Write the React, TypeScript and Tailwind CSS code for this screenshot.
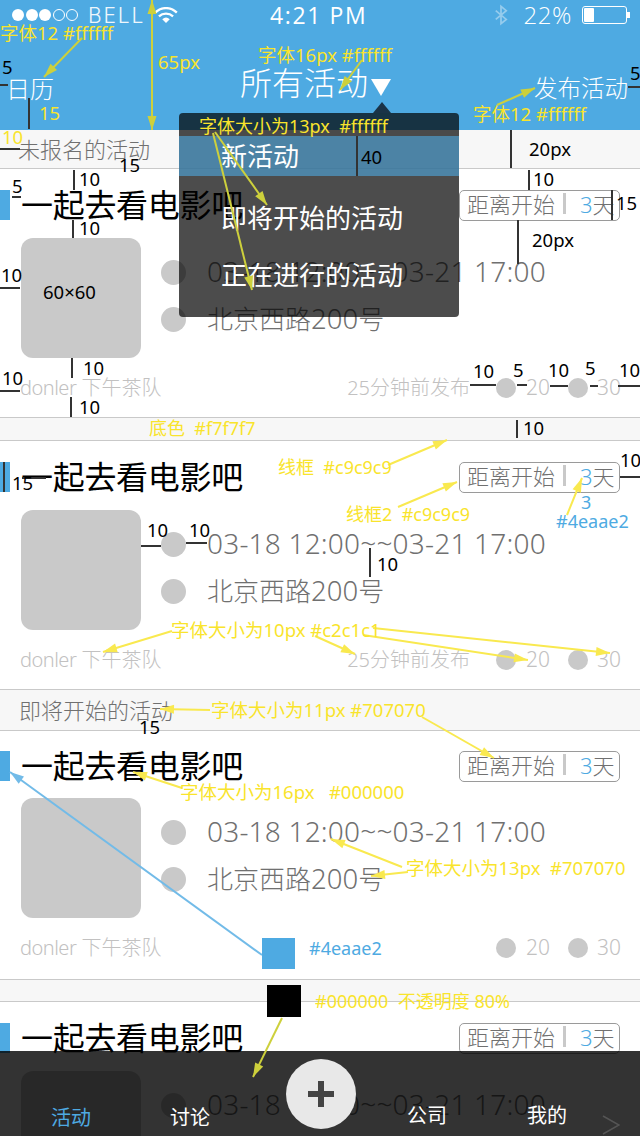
import React from "react";

const Dot = () => <span className="w-[25px] h-[25px] rounded-full bg-[#c9c9c9] shrink-0" />;
const SmallDot = ({ c }: { c: string }) => <span className={`${c} w-[20px] h-[20px] rounded-full bg-[#c9c9c9] shrink-0`} />;

function Section({ text, h }: { text: string; h: string }) {
  return (
    <div className={`${h} flex items-center bg-[#f7f7f7] text-[22px] text-[#707070]`}>{text}</div>
  );
}

function Card({ time = true, compact = false }: { time?: boolean; compact?: boolean }) {
  return (
    <div className={`h-[250px] shrink-0 bg-white border-y border-[#c9c9c9] overflow-hidden ${compact ? "pt-[20px]" : "pt-[21px]"}`}>
      <div className="h-[30px] flex items-center">
        <span className="w-[10px] h-[30px] bg-[#4eaae2]" />
        <span className="ml-[11px] text-[32px] leading-[30px] text-black font-normal tracking-[-0.3px]">一起去看电影吧</span>
        <div className="ml-auto mr-5 w-[161px] h-[31px] flex items-center border border-[#9a9a9a] rounded-[5px] pl-[7px] pb-[3px] text-[22px] leading-[26px] text-[#707070]">
          <span>距离开始</span>
          <span className="ml-[8px] w-[3px] h-[21px] bg-[#c9c9c9]" />
          <span className="ml-[14px] text-[#4eaae2]">3</span>
          <span>天</span>
        </div>
      </div>
      <div className={`${compact ? "mt-[17px]" : "mt-[18px]"} ml-[21px] flex h-[120px]`}>
        <div className="w-[120px] h-[120px] rounded-[12px] bg-[#c9c9c9]" />
        <div className="ml-5 pt-[22px] flex flex-col gap-[21px] text-[26px] leading-[25px] text-[#707070]">
          <div className="flex items-center gap-[21px]"><Dot /><span className="text-[28px] tracking-[0.2px] -translate-y-px">03-18 12:00~~03-21 17:00</span></div>
          <div className="flex items-center gap-[21px]"><Dot /><span className="text-[26px]">北京西路<span className="text-[27.5px]">200</span>号</span></div>
        </div>
      </div>
      <div className="mt-5 h-[20px] pl-5 pr-5 flex items-center text-[20px] text-[#c2c1c1]">
        <span className="flex-1 whitespace-pre"><span className="tracking-[-0.5px]">donler</span> 下午茶队</span>
        {time && <span>25分钟前发布</span>}
        <SmallDot c="ml-[26px]" />
        <span className="ml-[10px] text-[21px] w-[23px]">20</span>
        <SmallDot c="ml-[19px]" />
        <span className="ml-[9px] text-[21px] w-[23px]">30</span>
      </div>
    </div>
  );
}

const yellowLabels = [
  { c: "left-0 top-[23px] text-[18.5px]", t: "字体12 #ffffff" },
  { c: "left-[158px] top-[52px] text-[18.5px]", t: "65px" },
  { c: "left-[39px] top-[103px] text-[18.5px]", t: "15" },
  { c: "left-[2px] top-[127px] text-[18.5px]", t: "10" },
  { c: "left-[258px] top-[45px] text-[18.5px]", t: "字体16px #ffffff" },
  { c: "left-[473px] top-[104px] text-[18.5px]", t: "字体12 #ffffff" },
  { c: "left-[199px] top-[116px] text-[18px]", t: "字体大小为13px  #ffffff" },
  { c: "left-[149px] top-[418px] text-[18px]", t: "底色  #f7f7f7" },
  { c: "left-[278px] top-[457px] text-[18px]", t: "线框  #c9c9c9" },
  { c: "left-[346px] top-[504px] text-[18px]", t: "线框2  #c9c9c9" },
  { c: "left-[171px] top-[620px] text-[18.5px]", t: "字体大小为10px #c2c1c1" },
  { c: "left-[211px] top-[700px] text-[18.5px]", t: "字体大小为11px #707070" },
  { c: "left-[180px] top-[782px] text-[18.5px]", t: "字体大小为16px   #000000" },
  { c: "left-[406px] top-[858px] text-[18.5px]", t: "字体大小为13px  #707070" },
  { c: "left-[315px] top-[991px] text-[18px]", t: "#000000  不透明度 80%" },
];
const blueLabels = [
  { c: "left-[581px] top-[492px]", t: "3" },
  { c: "left-[556px] top-[511px]", t: "#4eaae2" },
  { c: "left-[309px] top-[938px]", t: "#4eaae2" },
];
const blackLabels = [
  { c: "left-[2px] top-[57px]", t: "5" },
  { c: "left-[630px] top-[63px]", t: "5" },
  { c: "left-[529px] top-[139px]", t: "20px" },
  { c: "left-[119px] top-[155px]", t: "15" },
  { c: "left-[79px] top-[169px]", t: "10" },
  { c: "left-[533px] top-[169px]", t: "10" },
  { c: "left-[12px] top-[176px]", t: "5" },
  { c: "left-[79px] top-[218px]", t: "10" },
  { c: "left-[616px] top-[193px]", t: "15" },
  { c: "left-[532px] top-[230px]", t: "20px" },
  { c: "left-[361px] top-[147px]", t: "40" },
  { c: "left-[43px] top-[282px]", t: "60×60" },
  { c: "left-[1px] top-[265px]", t: "10" },
  { c: "left-[83px] top-[358px]", t: "10" },
  { c: "left-[2px] top-[368px]", t: "10" },
  { c: "left-[79px] top-[397px]", t: "10" },
  { c: "left-[473px] top-[361px]", t: "10" },
  { c: "left-[513px] top-[360px]", t: "5" },
  { c: "left-[548px] top-[360px]", t: "10" },
  { c: "left-[585px] top-[358px]", t: "5" },
  { c: "left-[619px] top-[360px]", t: "10" },
  { c: "left-[523px] top-[418px]", t: "10" },
  { c: "left-[12px] top-[473px]", t: "15" },
  { c: "left-[620px] top-[450px]", t: "10" },
  { c: "left-[147px] top-[520px]", t: "10" },
  { c: "left-[189px] top-[520px]", t: "10" },
  { c: "left-[377px] top-[554px]", t: "10" },
  { c: "left-[139px] top-[717px]", t: "15" },
];

const blackLines: [number, number, number, number][] = [
  [29, 98, 29, 129], [0, 85, 8, 85], [628, 87, 640, 87], [0, 149, 20, 149], [511, 130, 511, 168],
  [357, 136, 357, 176], [74, 170, 74, 190], [73, 220, 73, 238], [529, 170, 529, 190], [518, 220, 518, 264],
  [612, 190, 612, 220], [12, 197, 21, 197], [0, 288, 20, 288], [72, 358, 72, 378], [71, 397, 71, 417], [0, 391, 20, 391],
  [470, 385, 496, 385], [517, 385, 527, 385], [550, 386, 568, 386], [590, 386, 598, 386], [618, 386, 640, 386],
  [517, 420, 517, 438], [4, 462, 4, 492], [22, 478, 46, 478], [141, 546, 161, 546], [186, 543, 207, 543],
  [370, 548, 370, 577], [620, 477, 640, 477],
];

const Arrow = ({ d, color }: { d: [number, number, number, number]; color: string }) => {
  const [x1, y1, x2, y2] = d;
  const a = Math.atan2(y2 - y1, x2 - x1);
  const l = 14;
  const s = 4.5;
  const bx = x2 - l * Math.cos(a);
  const by = y2 - l * Math.sin(a);
  const p = `${x2},${y2} ${bx - s * Math.sin(a)},${by + s * Math.cos(a)} ${bx + s * Math.sin(a)},${by - s * Math.cos(a)}`;
  return (
    <g>
      <line x1={x1} y1={y1} x2={x2} y2={y2} stroke={color} strokeWidth={2} />
      <polygon points={p} fill={color} />
    </g>
  );
};

const yellowArrows: [number, number, number, number][] = [
  [388, 465, 447, 440], [398, 507, 457, 482], [567, 515, 582, 478], [172, 631, 103, 652], [315, 636, 355, 654],
  [363, 635, 528, 660], [373, 628, 610, 653], [210, 710, 160, 709], [422, 717, 494, 758], [182, 788, 133, 772],
  [402, 867, 331, 839], [408, 872, 371, 876],
];
const oliveArrows: [number, number, number, number][] = [
  [82, 38, 44, 77], [152, 20, 152, 130], [152, 50, 152, 0], [362, 60, 340, 90], [497, 105, 535, 88],
  [215, 132, 267, 205], [213, 133, 252, 290], [282, 1018, 253, 1077],
];

export default function App() {
  return (
    <div className="relative w-[640px] h-[1136px] overflow-hidden bg-[#f7f7f7] font-['Noto_Sans','Noto_Sans_CJK_SC',sans-serif] font-light">
      {/* Header */}
      <header className="h-[130px] bg-[#4eaae2] text-white">
        <div className="h-[30px] flex items-center pl-3 pr-[10px] relative">
          <div className="flex gap-[1.5px]">
            <span className="w-3 h-3 rounded-full bg-white" />
            <span className="w-3 h-3 rounded-full bg-white" />
            <span className="w-3 h-3 rounded-full bg-white" />
            <span className="w-3 h-3 rounded-full border border-white" />
            <span className="w-3 h-3 rounded-full border border-white" />
          </div>
          <span className="ml-[10px] text-[21px] leading-none tracking-[1.8px] opacity-90 font-['Inter',sans-serif]">BELL</span>
          <svg className="ml-[9px]" width="24" height="16" viewBox="0 0 25 17">
            <path d="M1 6 A16 16 0 0 1 24 6" fill="none" stroke="white" strokeWidth="2.4" />
            <path d="M5 10 A11 11 0 0 1 20 10" fill="none" stroke="white" strokeWidth="2.4" />
            <path d="M8.5 13 A6 6 0 0 1 16.5 13 L12.5 17 Z" fill="white" />
          </svg>
          <span className="absolute left-[270px] text-[23px] tracking-[1.6px] font-normal font-['Open_Sans',sans-serif]">4:21 PM</span>
          <svg className="ml-auto opacity-40" width="14" height="22" viewBox="0 0 16 24">
            <path d="M2 7 L14 17 L8 22 L8 2 L14 7 L2 17" fill="none" stroke="white" strokeWidth="2" />
          </svg>
          <span className="ml-[15px] text-[24px] leading-none tracking-[0.6px] font-['Open_Sans',sans-serif]">22%</span>
          <div className="ml-[10px] w-[45px] h-[18px] border border-white rounded-[3px] p-[1px] flex">
            <span className="w-[10px] bg-white rounded-[1px]" />
          </div>
          <span className="w-[3px] h-[6px] bg-white" />
        </div>
        <div className="relative h-[100px] flex">
          <span className="absolute left-[6px] top-[44px] text-[24px] leading-[30px]">日历</span>
          <span className="absolute left-[240px] top-[35px] text-[32px] leading-[36px]">所有活动</span>
          <span className="absolute left-[371px] top-[49px] w-0 h-0 border-x-[10px] border-x-transparent border-t-[17px] border-t-white" />
          <span className="absolute right-[12px] top-[43px] text-[23.5px] leading-[30px]">发布活动</span>
        </div>
      </header>

      {/* List */}
      <main className="flex flex-col">
        <Section text="未报名的活动" h="h-[38px] pl-[18px]" />
        <Card />
        <div className="h-[22px] shrink-0" />
        <Card />
        <Section text="即将开始的活动" h="h-[40px] pl-[19px] shrink-0" />
        <Card compact time={false} />
        <div className="h-[21px] shrink-0" />
        <Card />
      </main>

      {/* Dropdown */}
      <div className="absolute left-[179px] top-[113px] w-[280px] h-[204px] rounded-[4px] bg-black/70 text-white text-[26px] font-normal pt-[23px]">
        <span className="absolute left-[194px] -top-[11px] w-0 h-0 border-x-[9px] border-x-transparent border-b-[11px] border-b-[#1a3347]" />
        <div className="h-[40px] flex items-center pl-[42px] bg-[#4eaae2]/60">新活动</div>
        <div className="h-[84px] flex items-center pl-[42px]">即将开始的活动</div>
        <div className="h-[30px] flex items-center pl-[42px]">正在进行的活动</div>
      </div>

      {/* Tab bar */}
      <nav className="absolute left-0 right-0 bottom-0 h-[85px] bg-black/80 text-white text-[20px] font-normal">
        <span className="absolute left-[51px] top-[55px] leading-6 text-[#4eaae2]">活动</span>
        <span className="absolute left-[170px] top-[55px] leading-6">讨论</span>
        <div className="absolute left-[286px] top-[8px] w-[70px] h-[70px] rounded-full bg-[#e8e8e8] flex items-center justify-center">
          <svg width="26" height="26" viewBox="0 0 26 26"><path d="M10 0h6v10h10v6H16v10h-6V16H0v-6h10z" fill="#444" /></svg>
        </div>
        <span className="absolute left-[407px] top-[53px] leading-6">公司</span>
        <span className="absolute left-[527px] top-[53px] leading-6">我的</span>
        <svg className="absolute left-[602px] top-[64px]" width="18" height="20" viewBox="0 0 18 20">
          <path d="M1 1 L17 10 L1 19" fill="none" stroke="#555" strokeWidth="1.5" />
        </svg>
      </nav>

      {/* Spec annotations */}
      <svg className="absolute inset-0 pointer-events-none" width="640" height="1136">
        {blackLines.map((l, i) => (
          <line key={i} x1={l[0]} y1={l[1]} x2={l[2]} y2={l[3]} stroke="#333" strokeWidth={2} />
        ))}
        {yellowArrows.map((d, i) => <Arrow key={i} d={d} color="#f9e94f" />)}
        {oliveArrows.map((d, i) => <Arrow key={i} d={d} color="#cdd03c" />)}
        <Arrow d={[262, 955, 10, 772]} color="#72bbe8" />
      </svg>
      <span className="absolute left-[262px] top-[938px] w-[33px] h-[31px] bg-[#4eaae2]" />
      <span className="absolute left-[267px] top-[985px] w-[34px] h-[32px] bg-black" />
      {yellowLabels.map((l) => (
        <span key={l.t + l.c} className={`absolute ${l.c} leading-5 whitespace-pre font-normal text-[#f9e42c]`}>{l.t}</span>
      ))}
      {blueLabels.map((l) => (
        <span key={l.c} className={`absolute ${l.c} text-[18px] leading-5 whitespace-pre font-normal text-[#4eaae2]`}>{l.t}</span>
      ))}
      {blackLabels.map((l) => (
        <span key={l.c} className={`absolute ${l.c} text-[18.5px] leading-5 whitespace-pre font-normal text-black`}>{l.t}</span>
      ))}
    </div>
  );
}
